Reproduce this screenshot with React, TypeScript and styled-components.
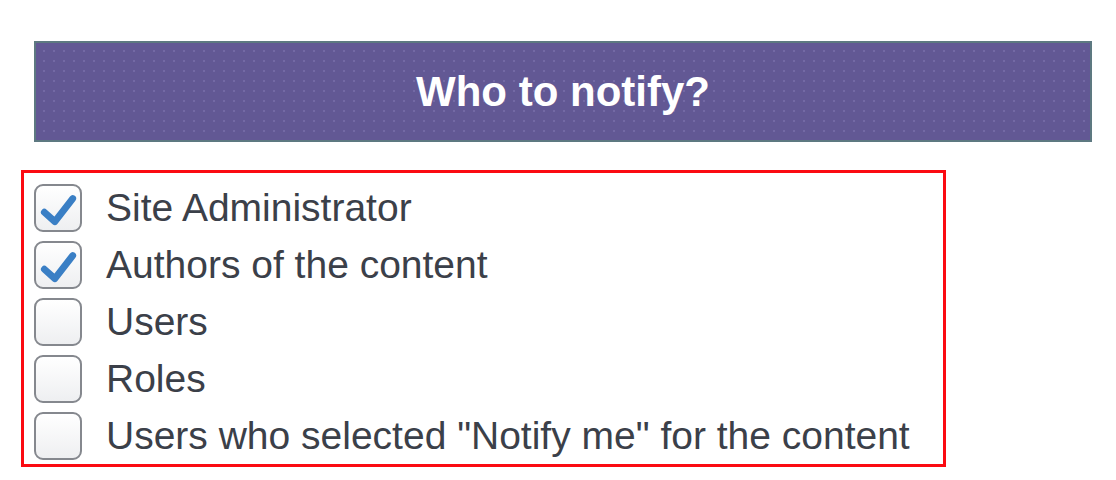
import React from 'react';
import styled, { createGlobalStyle } from 'styled-components';

const GlobalStyle = createGlobalStyle`
  body {
    margin: 0;
    background: #ffffff;
    font-family: 'Liberation Sans', Arial, sans-serif;
  }
`;

const Page = styled.div`
  padding: 41px 0 0 21px;
`;

const Header = styled.div`
  box-sizing: border-box;
  margin-left: 13px;
  width: 1058px;
  height: 101px;
  display: flex;
  align-items: center;
  justify-content: center;
  border: 2px solid #5d7981;
  background-color: #625894;
  background-image: radial-gradient(circle, rgba(150, 140, 200, 0.5) 0.5px, transparent 1.1px);
  background-size: 10px 10px;
  background-position: 3px 3px;
`;

const Title = styled.h2`
  margin: 0;
  color: #ffffff;
  font-size: 42px;
  font-weight: 700;
`;

const OptionBox = styled.div`
  box-sizing: border-box;
  margin-top: 28px;
  width: 925px;
  height: 297px;
  border: 3px solid #fb0a12;
  padding: 11px 0 0 10px;
  display: flex;
  flex-direction: column;
  gap: 9px;
`;

const OptionRow = styled.label`
  display: flex;
  align-items: center;
  gap: 24px;
  height: 48px;
  color: #3b4049;
  font-size: 39px;
  line-height: 48px;
`;

const Box = styled.span`
  box-sizing: border-box;
  flex: none;
  width: 48px;
  height: 48px;
  border: 2.5px solid #85888e;
  border-radius: 9px;
  background: linear-gradient(#ffffff, #eeeff1);
  display: flex;
  align-items: center;
  justify-content: center;
`;

const Check = ({ checked }: { checked: boolean }) => (
  <Box>
    {checked && (
      <svg width="42" height="42" viewBox="0 0 40 40">
        <path
          d="M7 24 L17 33 L34 11"
          fill="none"
          stroke="#3a7fc5"
          strokeWidth="6.5"
          strokeLinecap="round"
          strokeLinejoin="round"
        />
      </svg>
    )}
  </Box>
);

const options = [
  { label: 'Site Administrator', checked: true },
  { label: 'Authors of the content', checked: true },
  { label: 'Users', checked: false },
  { label: 'Roles', checked: false },
  { label: 'Users who selected "Notify me" for the content', checked: false },
];

function App() {
  return (
    <>
      <GlobalStyle />
      <Page>
        <Header>
          <Title>Who to notify?</Title>
        </Header>
        <OptionBox>
          {options.map(({ label, checked }) => (
            <OptionRow key={label}>
              <Check checked={checked} />
              <span>{label}</span>
            </OptionRow>
          ))}
        </OptionBox>
      </Page>
    </>
  );
}

export default App;
